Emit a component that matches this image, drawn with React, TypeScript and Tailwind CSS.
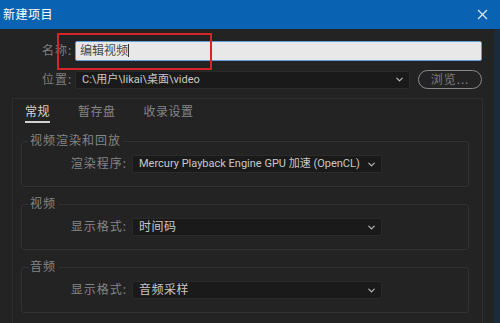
import { ChevronDown } from "lucide-react";

const font = { fontFamily: '"Noto Sans", "Noto Sans CJK SC", sans-serif' };
const uiFont = { fontFamily: 'Roboto, "Noto Sans CJK SC", sans-serif' };

function Select({ text, width, small }: { text: string; width: string; small?: boolean }) {
  return (
    <div className={`${width} shrink-0 h-[18px] flex items-center justify-between bg-[#1a1a1a] border border-[#2a2a2a] rounded-[2px] pl-[6px] pr-[4px] overflow-hidden`}>
      <span className={`${small ? "text-[11px]" : "text-[12px] tracking-[0.5px]"} leading-[16px] text-[#c8c8c8] whitespace-nowrap`} style={uiFont}>{text}</span>
      <ChevronDown size={11} strokeWidth={2.5} className="text-[#bdbdbd] shrink-0" />
    </div>
  );
}

function Group({ title, label, value, small }: { title: string; label: string; value: string; small?: boolean }) {
  return (
    <fieldset className="border border-[#313131] rounded-[3px] pt-[7px] pb-[13px]">
      <legend className="ml-[6px] px-[2px] text-[12px] leading-[14px] tracking-[1px] text-[#858585]">{title}</legend>
      <div className="flex items-center gap-[5px]">
        <span className="w-[105px] shrink-0 text-right text-[12px] tracking-[1px] text-[#858585] whitespace-nowrap">{label}</span>
        <Select text={value} width="w-[250px]" small={small} />
      </div>
    </fieldset>
  );
}

export default function App() {
  return (
    <div className="relative w-[500px] h-[323px] overflow-hidden bg-[#232323] flex flex-col" style={font}>
      {/* title bar */}
      <div className="h-[29px] shrink-0 bg-[#0a63b2] flex items-center justify-between pl-[3px] pr-[12px]">
        <span className="text-[12px] text-white tracking-[0.5px]">新建项目</span>
        <svg width="11" height="11" viewBox="0 0 11 11" className="text-[#dfe9f4]">
          <path d="M1 1 L10 10 M10 1 L1 10" stroke="currentColor" strokeWidth="1.2" fill="none" />
        </svg>
      </div>

      <div className="flex flex-1 min-h-0">
        <div className="flex-1 flex flex-col">
          {/* name / location */}
          <div className="pl-[42px] pr-[12px] pt-[12px] flex flex-col gap-[10px]">
            <div className="flex items-center h-[19px]">
              <span className="w-[33px] shrink-0 whitespace-nowrap text-[12px] tracking-[1px] text-[#7f7f7f]">名称:</span>
              <div className="flex-1 h-[20px] bg-[#e8e8e8] border border-[#5e9fd8] rounded-[2px] flex items-center pl-[4px]">
                <span className="text-[12px] leading-[16px] text-[#4a4a4a]">编辑视频</span>
                <span className="w-px h-[13px] bg-[#333]" />
              </div>
            </div>
            <div className="flex items-center h-[19px]">
              <span className="w-[33px] shrink-0 whitespace-nowrap text-[12px] tracking-[1px] text-[#7f7f7f]">位置:</span>
              <Select text="C:\用户\likai\桌面\video" width="w-[335px]" small />
              <button className="ml-[8px] flex-1 h-[19px] rounded-full border-[1.5px] border-[#8a8a8a] text-[12px] leading-[14px] text-[#7d7d7d] tracking-[1px] whitespace-nowrap">
                浏览...
              </button>
            </div>
          </div>

          {/* tabbed panel */}
          <div className="ml-[12px] mr-[11px] mt-[9px] border border-[#2e2e2e] px-[8px] pb-[20px]">
            <div className="flex gap-[28px] ml-[4px] pt-[5px] text-[12px] leading-[16px] tracking-[0.5px]">
              <span className="text-[#d2d2d2] pb-[1px] border-b-2 border-[#d2d2d2]">常规</span>
              <span className="text-[#858585]">暂存盘</span>
              <span className="text-[#858585]">收录设置</span>
            </div>
            <div className="mt-[11px] mr-[5px] flex flex-col gap-[10px]">
              <Group title="视频渲染和回放" label="渲染程序:" value="Mercury Playback Engine GPU 加速 (OpenCL)" small />
              <Group title="视频" label="显示格式:" value="时间码" />
              <Group title="音频" label="显示格式:" value="音频采样" />
            </div>
          </div>
        </div>
        <div className="w-[6px] bg-[#1b2b3b]" />
      </div>

      {/* red annotation box */}
      <div className="absolute left-[57px] top-[33px] w-[155px] h-[37px] border-2 border-[#d6242b]" />
    </div>
  );
}
